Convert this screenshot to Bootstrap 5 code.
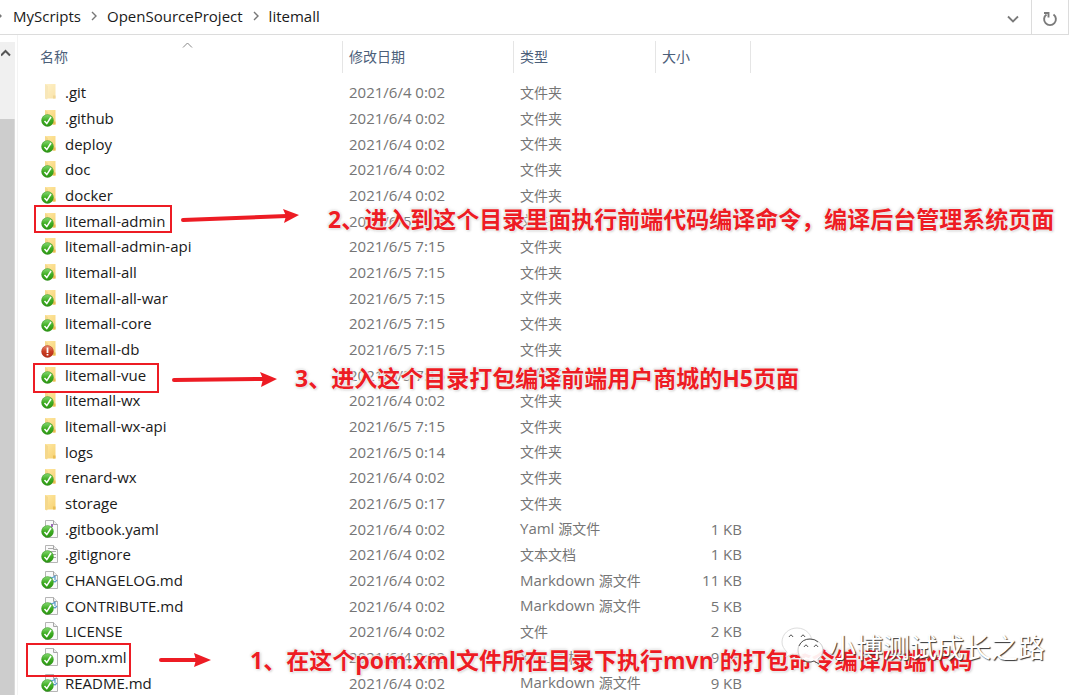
<!DOCTYPE html>
<html lang="zh-CN">
<head>
<meta charset="utf-8">
<meta name="viewport" content="width=device-width, initial-scale=1">
<title>litemall</title>
<link href="https://cdn.jsdelivr.net/npm/bootstrap@5.3.0/dist/css/bootstrap.min.css" rel="stylesheet">
<style>
  body { font-family: "Open Sans", "Noto Sans CJK SC", sans-serif; font-size: 15px; line-height: 20px; color: #1a1a1a; background: #fff; }
  .window { height: 100vh; }
  .address { height: 35px; border-bottom: 1px solid #dcdcdc; margin-right: 11px; }
  .address nav { padding-bottom: 2px; }
  .address .breadcrumb { gap: 10px; }
  .address a { color: #1a1a1a; text-decoration: none; font-size: 15px; }
  .tool { border: 0; background: none; padding: 0; width: 37px; color: #7a7a7a; }
  .tool.framed { border-left: 1px solid #dcdcdc; border-right: 1px solid #dcdcdc; width: 38px; }
  .track { width: 15px; background: #f0f0f0; margin-top: 7px; }
  .track button { border: 0; background: none; padding: 0 0 0 1px; height: 20px; line-height: 1; text-align: left; }
  .thumb { background: #cdcdcd; margin-top: 57px; border-right: 1px solid #dadada; }
  .pane { border-left: 1px solid #f3f3f3; margin-left: 2px; padding-top: 6px; }
  .files { table-layout: fixed; width: 733px; border-collapse: separate; border-spacing: 0; }
  .files th { height: 32px; font-weight: 400; font-size: 14px; color: #4c607a; border-right: 1px solid #e5e5e5; padding: 0 0 0 6px; }
  .files th:first-child { padding-left: 22px; }
  .files tbody::before { content: ""; display: block; height: 6px; }
  .files tbody tr { height: 26px; }
  .files tbody tr:nth-child(3n) { height: 25px; }
  .files td { padding: 0 0 0 6px; color: #757575; white-space: nowrap; font-size: 15px; vertical-align: middle; line-height: 20px; }
  .files td:first-child { padding-left: 23px; color: #1a1a1a; }
  .files td:first-child svg { display: block; margin-right: 6px; }
  .files td:last-child { padding: 0 9px 0 0; text-align: right; }
  .files .han { font-size: 14px; }
  .sorter { left: 164px; top: 0; }
  .sorter svg { display: block; }
  .callout { pointer-events: none; white-space: nowrap; color: #ed1c24; font-weight: 700; font-size: 23px; line-height: 28px; }
  .callout .frame { border: 2px solid #ed1c24; }
  .callout .words { text-shadow: 0 0 2px #fff, 0 0 2px #fff, 1px 1px 2px #ccc, -1px -1px 2px #ddd, 0 0 4px #ddd; }
  .c-admin { left: 34px; top: 205px; }
  .c-admin .frame { width: 138px; height: 28px; }
  .c-vue { left: 33px; top: 363px; }
  .c-vue .frame { width: 126px; height: 30px; }
  .c-pom { left: 26px; top: 643px; }
  .c-pom .frame { width: 105px; height: 34px; }
  .watermark { right: 35px; top: 625px; color: #fff; font: 400 27px/44px "Noto Sans CJK SC", sans-serif; text-shadow: 1px 1px 1px #333; white-space: nowrap; gap: 4px; }
</style>
</head>
<body>
<svg class="position-absolute" width="0" height="0" aria-hidden="true">
  <defs>
    <linearGradient id="gold" x1="0" x2="1" y2="1"><stop stop-color="#ffe9a6"/><stop offset="1" stop-color="#f6d171"/></linearGradient>
    <linearGradient id="green" x2="0" y2="1"><stop stop-color="#86d873"/><stop offset=".5" stop-color="#3fae22"/><stop offset="1" stop-color="#2c9414"/></linearGradient>
    <linearGradient id="red" x2="0" y2="1"><stop stop-color="#e98a70"/><stop offset=".5" stop-color="#cb3f24"/><stop offset="1" stop-color="#b52c17"/></linearGradient>
    <symbol id="folder" viewBox="0 0 18 20"><path d="M4 2h10.500v14.500H4z" fill="url(#gold)"/><path d="M4 2l3 2v11.500l-1 2-2-1z" fill="#f5d88c"/><path d="M12 13.500h2.500v3H12z" fill="#e9bd55"/></symbol>
    <symbol id="page" viewBox="0 0 18 20"><path d="M4.500 1.500h8l4 4v13h-12z" fill="#fafafa" stroke="#b5b5b5"/><path d="M12.500 1.500v4h4" fill="#eee" stroke="#a5a5a5"/></symbol>
    <symbol id="ok" viewBox="0 0 18 20"><circle cx="6.500" cy="12.500" r="5.900" fill="url(#green)" stroke="#2f8f1a" stroke-width=".5"/><path d="M3.500 13l2.300 2.600L10 9" fill="none" stroke="#fff" stroke-width="1.500"/></symbol>
    <symbol id="changed" viewBox="0 0 18 20"><circle cx="6.500" cy="12.500" r="5.900" fill="url(#red)" stroke="#a82a18" stroke-width=".5"/><path d="M6.500 8.500v5.500M6.500 15v1.500" stroke="#fff" stroke-width="1.800"/></symbol>
  </defs>
</svg>

<div class="window d-flex flex-column overflow-hidden position-relative">
  <header class="address d-flex align-items-stretch flex-shrink-0">
    <nav class="d-flex align-items-center flex-grow-1" aria-label="路径">
      <ol class="breadcrumb align-items-center m-0">
        <li><svg width="3" height="10" class="d-block" fill="none" stroke="#777" stroke-width="1.400"><path d="M-3 1l4 4-4 4"/></svg></li>
        <li><a href="#">MyScripts</a></li>
        <li><svg width="6" height="10" class="d-block" fill="none" stroke="#777" stroke-width="1.400"><path d="M1 1l4 4-4 4"/></svg></li>
        <li><a href="#">OpenSourceProject</a></li>
        <li><svg width="6" height="10" class="d-block" fill="none" stroke="#777" stroke-width="1.400"><path d="M1 1l4 4-4 4"/></svg></li>
        <li><a href="#">litemall</a></li>
      </ol>
    </nav>
    <button class="tool" type="button" aria-label="展开"><svg width="12" height="8" fill="none" stroke="currentColor" stroke-width="1.800"><path d="M1 1.500l5 5 5-5"/></svg></button>
    <button class="tool framed" type="button" aria-label="刷新"><svg width="16" height="16" fill="none" stroke="currentColor" stroke-width="1.900"><path d="M11.500 3.500A5.900 5.900 0 1 1 4.500 3.500M2 2h4.500v4.500"/></svg></button>
  </header>

  <main class="d-flex flex-grow-1">
    <div class="track d-flex flex-column flex-shrink-0">
      <button type="button" aria-label="向上滚动"><svg width="10" height="8" fill="none" stroke="#555" stroke-width="2"><path d="M0 6.500L4.500 2 9 6.500"/></svg></button>
      <div class="thumb flex-grow-1"></div>
    </div>
    <section class="pane flex-grow-1">
      <table class="files">
        <colgroup><col style="width:325px"><col style="width:171px"><col style="width:142px"><col style="width:95px"></colgroup>
        <thead><tr>
          <th scope="col" class="position-relative">名称<span class="sorter position-absolute"><svg width="11" height="8" fill="none" stroke="#888"><path d="M1 6.500l4.500-4.500L10 6.500"/></svg></span></th>
          <th scope="col">修改日期</th><th scope="col">类型</th><th scope="col">大小</th>
        </tr></thead>
        <tbody id="rows"></tbody>
      </table>
    </section>
  </main>

  <div class="callout c-admin position-absolute d-flex align-items-center">
    <div class="frame"></div>
    <svg width="156" height="28"><path d="M11 15L115 11" stroke="#ed1c24" stroke-width="4" stroke-linecap="round"/><path d="M111 4l16 6-15 8 2-7z" fill="#ed1c24"/></svg>
    <div class="words">2、进入到这个目录里面执行前端代码编译命令，编译后台管理系统页面</div>
  </div>
  <div class="callout c-vue position-absolute d-flex align-items-center">
    <div class="frame"></div>
    <svg width="136" height="28"><path d="M15 16L104 15" stroke="#ed1c24" stroke-width="4" stroke-linecap="round"/><path d="M101 8l17 7-16 8 2-8z" fill="#ed1c24"/></svg>
    <div class="words">3、进入这个目录打包编译前端用户商城的H5页面</div>
  </div>
  <div class="callout c-pom position-absolute d-flex align-items-center">
    <div class="frame"></div>
    <svg width="119" height="28"><path d="M35 14H66" stroke="#ed1c24" stroke-width="4" stroke-linecap="round"/><path d="M30 14H40" stroke="#ed1c24" stroke-width="4" stroke-linecap="round"/><path d="M63 7l17 7-17 7 2-7z" fill="#ed1c24"/></svg>
    <div class="words">1、在这个pom.xml文件所在目录下执行mvn 的打包命令编译后端代码</div>
  </div>

  <div class="watermark position-absolute d-flex align-items-center">
    <svg width="44" height="40" viewBox="0 0 44 40"><path d="M16 1C8 1 1 7 1 15c0 4 2 7 5 10l-1 5 6-3c8 2 20-1 20-12C31 8 25 1 16 1z" fill="#fff" fill-opacity=".92" stroke="#ddd"/><path d="M29 12c-7 0-12 5-12 11s5 12 12 12l4-1 5 3-1-5c3-2 5-5 5-9 0-6-6-11-13-11z" fill="#fff" fill-opacity=".92" stroke="#ccc"/><path d="M18 19q3-7 11-7q5 0 8 3M22 33q4 3 8 2l3-1 5 3" fill="none" stroke="#555"/><path d="M8 10q2-4 4 0M20 10q2-4 4 0M23 20q2-4 4 0M33 20q2-4 4 0" fill="none" stroke="#555"/></svg>
    <span>小博测试成长之路</span>
  </div>
</div>

<script>
  const A = '2021/6/4 0:02', B = '2021/6/5 7:15', D = '文件夹', M = 'Markdown 源文件';
  const files = [
    ['.git', A, D, '', 'hidden'], ['.github', A, D], ['deploy', A, D], ['doc', A, D], ['docker', A, D],
    ['litemall-admin', B, D], ['litemall-admin-api', B, D], ['litemall-all', B, D], ['litemall-all-war', B, D],
    ['litemall-core', B, D], ['litemall-db', B, D, '', 'changed'], ['litemall-vue', B, D], ['litemall-wx', A, D],
    ['litemall-wx-api', B, D], ['logs', '2021/6/5 0:14', D, '', 'none'], ['renard-wx', A, D],
    ['storage', '2021/6/5 0:17', D, '', 'none'], ['.gitbook.yaml', A, 'Yaml 源文件', '1 KB'],
    ['.gitignore', A, '文本文档', '1 KB'], ['CHANGELOG.md', A, M, '11 KB'], ['CONTRIBUTE.md', A, M, '5 KB'],
    ['LICENSE', A, '文件', '2 KB'], ['pom.xml', A, 'XML 文档', '9 KB'], ['README.md', A, M, '9 KB']
  ];
  const marks = {
    'yaml': '<path d="M11 5v3" stroke="#8548a8" stroke-width="1.600"/>',
    'gitignore': '<path d="M7 4.500h5M7 7.500h8M11 10.500h4M12 13.500h3" stroke="#aaa"/>',
    'md': '<path d="M9 7l2 1 3-2v4M12 11l2 1 2-2" fill="none" stroke="#5b9cc9" stroke-width="1.200"/>'
  };
  document.getElementById('rows').innerHTML = files.map(([name, date, type, size = '', state = 'ok']) => {
    const folder = type === D;
    const icon = `<use href="#${folder ? 'folder' : 'page'}"${state === 'hidden' ? ' opacity=".6"' : ''}/>`
      + (marks[name.split('.').pop()] && !folder ? marks[name.split('.').pop()] : '')
      + (state === 'ok' || state === 'changed' ? `<use href="#${state}"/>` : '');
    const label = type.replace(/[\u4e00-\u9fff]+/, '<span class="han">$&</span>');
    return `<tr><td><div class="d-flex align-items-center"><svg width="18" height="20" viewBox="0 0 18 20">${icon}</svg>${name}</div></td><td>${date}</td><td>${label}</td><td>${size}</td></tr>`;
  }).join('');
</script>
<script src="https://cdn.jsdelivr.net/npm/bootstrap@5.3.0/dist/js/bootstrap.bundle.min.js"></script>
</body>
</html>
